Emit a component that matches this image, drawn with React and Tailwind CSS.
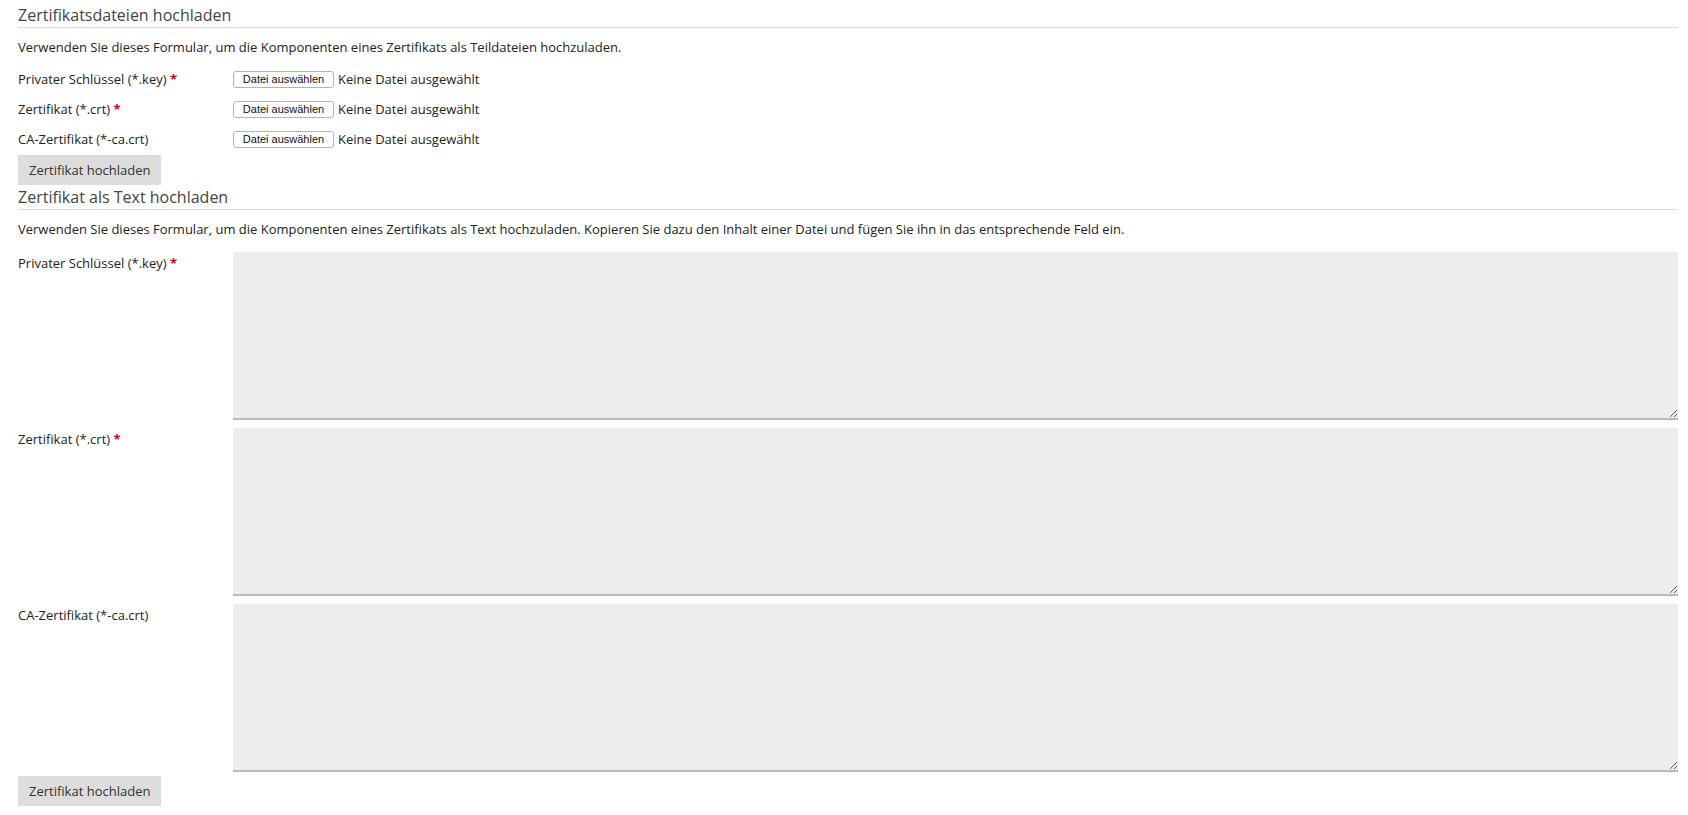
const fileRows = [
  { label: 'Privater Schlüssel (*.key)', required: true },
  { label: 'Zertifikat (*.crt)', required: true },
  { label: 'CA-Zertifikat (*-ca.crt)', required: false },
];

function Label({ text, required }) {
  return (
    <span>
      {text}
      {required && <span className="text-[#d0021b] font-bold"> *</span>}
    </span>
  );
}

function SectionHeading({ children, className = '' }) {
  return (
    <h2 className={`text-[16px] leading-[22px] text-[#444] pb-[1px] border-b border-[#dcdcdc] ${className}`}>
      {children}
    </h2>
  );
}

function SubmitButton({ className = '' }) {
  return (
    <button className={`h-[30px] px-[11px] bg-[#dddddd] text-[#333] text-[13px] ${className}`}>
      Zertifikat hochladen
    </button>
  );
}

export default function App() {
  return (
    <div className="min-h-screen bg-white pl-[18px] pr-[10px] pt-[4px] font-['Open_Sans',sans-serif] text-[13px] leading-[18px] text-[#222]">
      <SectionHeading>Zertifikatsdateien hochladen</SectionHeading>
      <p className="mt-[10px]">
        Verwenden Sie dieses Formular, um die Komponenten eines Zertifikats als Teildateien hochzuladen.
      </p>

      <div className="mt-[8px]">
        {fileRows.map(row => (
          <div key={row.label} className="flex items-center h-[30px]">
            <div className="w-[215px] shrink-0">
              <Label text={row.label} required={row.required} />
            </div>
            <button className="h-[17px] w-[101px] bg-white border border-[#b4b4b4] rounded-[3px] font-['Liberation_Sans',sans-serif] text-[11px] leading-[15px] text-[#111]">
              Datei auswählen
            </button>
            <span className="ml-[4px]">Keine Datei ausgewählt</span>
          </div>
        ))}
      </div>

      <SubmitButton className="mt-[1px]" />

      <SectionHeading className="mt-[1px]">Zertifikat als Text hochladen</SectionHeading>
      <p className="mt-[10px]">
        Verwenden Sie dieses Formular, um die Komponenten eines Zertifikats als Text hochzuladen. Kopieren Sie dazu den Inhalt einer Datei und fügen Sie ihn in das entsprechende Feld ein.
      </p>

      <div className="mt-[14px] flex flex-col gap-[8px]">
        {fileRows.map(row => (
          <div key={row.label} className="flex">
            <div className="w-[215px] shrink-0 pt-[2px]">
              <Label text={row.label} required={row.required} />
            </div>
            <textarea className="flex-1 h-[168px] bg-[#ececec] border-0 border-b-2 border-[#b3bac1] outline-none block" />
          </div>
        ))}
      </div>

      <SubmitButton className="mt-[4px]" />
    </div>
  );
}
